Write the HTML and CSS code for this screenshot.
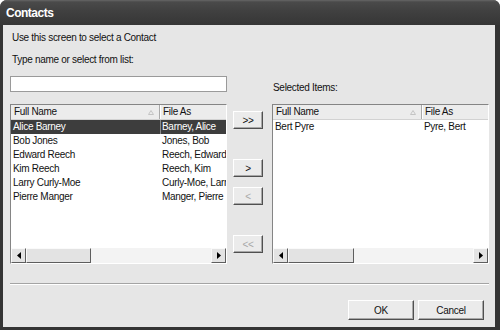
FILE: index.html
```html
<!DOCTYPE html>
<html lang="en">
<head>
  <meta charset="UTF-8" />
  <title>Contacts</title>
  <link rel="stylesheet" href="styles.css">
</head>
<body>
  <div class="window">
    <div class="titlebar">Contacts</div>
    <div class="client">
      <p class="hint">Use this screen to select a Contact</p>
      <p class="hint second">Type name or select from list:</p>

      <div class="picker">
        <div class="col">
          <input type="text" class="search">
          <div class="list">
            <div class="list-head">
              <span class="hcell name">Full Name <svg width="6" height="5" viewBox="0 0 6 5"><path d="M3 0.5 L5.5 4.5 L0.5 4.5 Z" fill="none" stroke="#c4c4c4"/></svg></span>
              <span class="hcell">File As</span>
            </div>
            <div class="rows">
              <div class="row selected"><span class="cell name">Alice Barney</span><span class="cell">Barney, Alice</span></div>
              <div class="row"><span class="cell name">Bob Jones</span><span class="cell">Jones, Bob</span></div>
              <div class="row"><span class="cell name">Edward Reech</span><span class="cell">Reech, Edward</span></div>
              <div class="row"><span class="cell name">Kim Reech</span><span class="cell">Reech, Kim</span></div>
              <div class="row"><span class="cell name">Larry Curly-Moe</span><span class="cell">Curly-Moe, Larry</span></div>
              <div class="row"><span class="cell name">Pierre Manger</span><span class="cell">Manger, Pierre</span></div>
            </div>
            <div class="hscroll">
              <span class="sbtn"><svg width="4" height="7" viewBox="0 0 4 7"><path d="M4 0 L0 3.5 L4 7 Z" fill="#000"/></svg></span>
              <span class="thumb"></span>
              <span class="track"></span>
              <span class="sbtn"><svg width="4" height="7" viewBox="0 0 4 7"><path d="M0 0 L4 3.5 L0 7 Z" fill="#000"/></svg></span>
            </div>
          </div>
        </div>

        <div class="movers">
          <button class="btn">&gt;&gt;</button>
          <button class="btn">&gt;</button>
          <button class="btn" disabled>&lt;</button>
          <button class="btn" disabled>&lt;&lt;</button>
        </div>

        <div class="col">
          <label class="label">Selected Items:</label>
          <div class="list wide">
            <div class="list-head">
              <span class="hcell name">Full Name <svg width="6" height="5" viewBox="0 0 6 5"><path d="M3 0.5 L5.5 4.5 L0.5 4.5 Z" fill="none" stroke="#c4c4c4"/></svg></span>
              <span class="hcell">File As</span>
            </div>
            <div class="rows">
              <div class="row"><span class="cell name">Bert Pyre</span><span class="cell">Pyre, Bert</span></div>
            </div>
            <div class="hscroll">
              <span class="sbtn"><svg width="4" height="7" viewBox="0 0 4 7"><path d="M4 0 L0 3.5 L4 7 Z" fill="#000"/></svg></span>
              <span class="thumb"></span>
              <span class="track"></span>
              <span class="sbtn"><svg width="4" height="7" viewBox="0 0 4 7"><path d="M0 0 L4 3.5 L0 7 Z" fill="#000"/></svg></span>
            </div>
          </div>
        </div>
      </div>

      <div class="separator"></div>
      <div class="footer">
        <button class="btn">OK</button>
        <button class="btn">Cancel</button>
      </div>
    </div>
  </div>
</body>
</html>
```

FILE: styles.css
```css
body { margin: 0; background: #fff; font-family: "Liberation Sans", Arial, sans-serif; font-size: 10px; letter-spacing: -0.3px; color: #111; }
.window { width: 500px; height: 330px; background: #343434; border-radius: 7px 7px 0 0; display: flex; flex-direction: column; overflow: hidden; }
.titlebar { height: 25px; flex: none; box-sizing: border-box; padding-left: 6px; line-height: 27px; color: #fff; font-weight: bold; font-size: 12px; letter-spacing: -0.5px; background: linear-gradient(#666 0, #4a4a4a 2px, #404040 45%, #363636 100%); }
.client { flex: 1; margin: 0 5px 3px 3px; background: #e6e6e6; padding: 7px 6px 0 7px; display: flex; flex-direction: column; }
.hint { margin: 0; line-height: 12px; padding-left: 2px; }
.hint.second { margin-top: 10px; }

.picker { display: flex; margin-top: 10px; }
.col { width: 217px; display: flex; flex-direction: column; }
.search { height: 16px; margin: 0; padding: 0; box-sizing: border-box; border: 1px solid #9a9a9a; background: #fff; }
.search + .list { margin-top: 12px; }
.label { display: block; margin: 6px 0 10px 1px; line-height: 12px; }

.list { height: 160px; box-sizing: border-box; border: 1px solid; border-color: #858585 #fff #fff #858585; background: #fff; display: flex; flex-direction: column; }
.list-head { display: flex; height: 15px; flex: none; box-sizing: border-box; background: #ececec; border-bottom: 1px solid #d2d2d2; }
.hcell { display: flex; align-items: center; padding-left: 3px; line-height: 14px; box-sizing: border-box; white-space: nowrap; }
.hcell.name { width: 149px; border-right: 1px solid #aaa; box-shadow: 1px 0 #fff; }
.hcell.name svg { margin-left: auto; margin-right: 5px; }

.rows { flex: 1; }
.row { display: flex; height: 14px; line-height: 14px; }
.row.selected { background: #3d3d3d; color: #fff; }
.cell { white-space: nowrap; overflow: hidden; padding-left: 2px; box-sizing: border-box; }
.cell.name { width: 149px; flex: none; }
.cell + .cell { flex: 1; }
.row.selected .cell + .cell { box-shadow: inset 1px 0 #8a8a8a; }

.hscroll { display: flex; height: 15px; flex: none; background: #f3f3f3; }
.sbtn, .thumb { box-sizing: border-box; border: 1px solid; border-color: #fafafa #5e5e5e #5e5e5e #fafafa; background: #e3e3e3; }
.sbtn { width: 15px; display: flex; align-items: center; justify-content: center; }
.thumb { width: 65px; }
.wide .thumb { width: 66px; }
.track { flex: 1; }

.btn { box-sizing: border-box; margin: 0; padding: 0; border: 1px solid; border-color: #fff #505050 #505050 #fff; box-shadow: inset -1px -1px #a8a8a8; background: #ebebeb; font: inherit; letter-spacing: inherit; color: #111; }
.btn:disabled { color: #a8a8a8; }
.movers { width: 30px; margin: 0 9px 0 6px; padding-top: 35px; display: flex; flex-direction: column; }
.movers .btn { height: 18px; }
.movers .btn:nth-child(2), .movers .btn:nth-child(4) { margin-top: 30px; }
.movers .btn:nth-child(3) { margin-top: 10px; }

.separator { margin-top: 19px; border-top: 1px solid #a4a4a4; border-bottom: 1px solid #fff; }
.footer { display: flex; justify-content: flex-end; gap: 4px; margin-top: 15px; padding-right: 5px; }
.footer .btn { width: 66px; height: 20px; }
```
